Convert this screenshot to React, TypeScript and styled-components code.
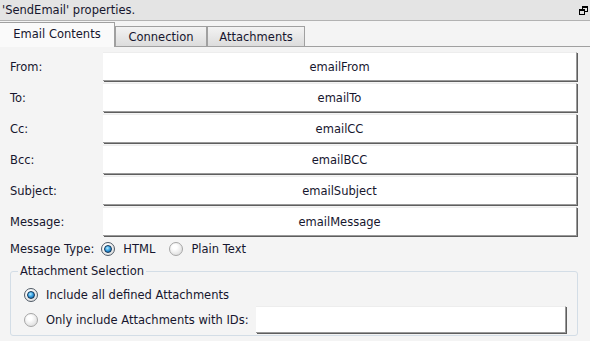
import React from "react";
import styled, { createGlobalStyle } from "styled-components";

const GlobalStyle = createGlobalStyle`
  body {
    margin: 0;
    font-family: "DejaVu Sans", Verdana, sans-serif;
    font-size: 11.5px;
    color: #16162e;
  }
`;

const Window = styled.div`
  width: 590px;
  height: 341px;
  background: #f4f4f4;
  display: flex;
  flex-direction: column;
  overflow: hidden;
`;

const TitleBar = styled.div`
  height: 20px;
  padding: 0 2px 0 2px;
  background: #e4e4e4;
  border-bottom: 1px solid #b2b2b2;
  display: flex;
  align-items: center;
  justify-content: space-between;
`;

const TabStrip = styled.div`
  height: 25px;
  display: flex;
  align-items: flex-end;
  border-bottom: 1px solid #a0a0a0;
`;

const Tab = styled.div<{ $active?: boolean; $width: number }>`
  box-sizing: border-box;
  width: ${(p) => p.$width}px;
  display: flex;
  align-items: center;
  justify-content: center;
  white-space: nowrap;
  border: 1px solid #a0a0a0;
  border-bottom: none;
  height: ${(p) => (p.$active ? "25px" : "20px")};
  margin-bottom: ${(p) => (p.$active ? "-1px" : "0")};
  padding-bottom: ${(p) => (p.$active ? "2px" : "0")};
  border-left: ${(p) => (p.$active ? "none" : "1px solid #a0a0a0")};
  background: ${(p) =>
    p.$active ? "#fafafa" : "linear-gradient(#f3f3f3, #dcdcdc)"};
  position: relative;
  z-index: ${(p) => (p.$active ? 1 : 0)};
`;

const Body = styled.div`
  padding: 5px 12px 0 10px;
  display: flex;
  flex-direction: column;
  gap: 2px;
`;

const Row = styled.div`
  display: grid;
  grid-template-columns: 93px 1fr;
  align-items: center;
  height: 29px;
`;

const Field = styled.div<{ $width?: number }>`
  box-sizing: border-box;
  height: ${(p) => (p.$width ? "27px" : "29px")};
  width: ${(p) => (p.$width ? `${p.$width}px` : "auto")};
  min-width: 0;
  flex-shrink: 1;
  background: #fff;
  border-top: 1px solid #ededed;
  border-right: 1px solid #9a9a9a;
  border-bottom: 1px solid #9a9a9a;
  box-shadow: 1px 1px 0 #5e5e5e;
  display: flex;
  align-items: center;
  justify-content: center;
  margin-left: ${(p) => (p.$width ? "auto" : "0")};
  margin-right: 1px;
`;

const TypeRow = styled.div`
  height: 22px;
  display: flex;
  align-items: center;
  gap: 7px;
`;

const Option = styled.label`
  display: inline-flex;
  align-items: center;
  gap: 8px;
  margin-right: 7px;
  white-space: nowrap;
  flex-shrink: 0;
`;

const Radio = styled.span<{ $checked?: boolean }>`
  box-sizing: border-box;
  width: 14px;
  height: 14px;
  border-radius: 50%;
  border: 1px solid ${(p) => (p.$checked ? "#4f5a66" : "#a6a6a6")};
  background: radial-gradient(circle at 40% 35%, #ffffff 20%, #d3d3d3 100%);
  display: inline-flex;
  align-items: center;
  justify-content: center;
  flex-shrink: 0;

  &::after {
    content: "";
    display: ${(p) => (p.$checked ? "block" : "none")};
    width: 8px;
    height: 8px;
    box-sizing: border-box;
    border-radius: 50%;
    border: 1px solid #0f3558;
    background: radial-gradient(
      circle at 40% 35%,
      #b4ecff 0%,
      #3aa4e6 45%,
      #0b4a86 100%
    );
  }
`;

const Group = styled.fieldset`
  min-width: 0;
  margin: 2px 0 0 0;
  padding: 5px 10px 2px 13px;
  border: 1px solid #d3dde6;
  border-radius: 3px;
  display: flex;
  flex-direction: column;
`;

const Legend = styled.legend`
  padding: 0 2px;
  margin-left: -6px;
  line-height: 14px;
`;

const GroupRow = styled.div<{ $tall?: boolean }>`
  height: ${(p) => (p.$tall ? "27px" : "23px")};
  display: flex;
  align-items: center;
`;

const RestoreIcon = () => (
  <svg width="9" height="9" viewBox="0 0 9 9" shapeRendering="crispEdges">
    <g fill="#000">
      <rect x="3" y="0" width="6" height="2" />
      <rect x="8" y="2" width="1" height="4" />
      <rect x="6" y="5" width="2" height="1" />
      <rect x="3" y="2" width="1" height="1" />
      <rect x="0" y="3" width="6" height="2" />
      <rect x="0" y="5" width="1" height="4" />
      <rect x="5" y="5" width="1" height="4" />
      <rect x="0" y="8" width="6" height="1" />
    </g>
  </svg>
);

const fields = [
  ["From:", "emailFrom"],
  ["To:", "emailTo"],
  ["Cc:", "emailCC"],
  ["Bcc:", "emailBCC"],
  ["Subject:", "emailSubject"],
  ["Message:", "emailMessage"],
];

export default function App() {
  return (
    <>
      <GlobalStyle />
      <Window>
        <TitleBar>
          <span>'SendEmail' properties.</span>
          <RestoreIcon />
        </TitleBar>
        <TabStrip>
          <Tab $active $width={115}>
            Email Contents
          </Tab>
          <Tab $width={92}>Connection</Tab>
          <Tab $width={98}>Attachments</Tab>
        </TabStrip>
        <Body>
          {fields.map(([label, value]) => (
            <Row key={label}>
              <span>{label}</span>
              <Field>{value}</Field>
            </Row>
          ))}
          <TypeRow>
            <span>Message Type:</span>
            <Option>
              <Radio $checked />
              HTML
            </Option>
            <Option>
              <Radio />
              Plain Text
            </Option>
          </TypeRow>
          <Group>
            <Legend>Attachment Selection</Legend>
            <GroupRow>
              <Option>
                <Radio $checked />
                Include all defined Attachments
              </Option>
            </GroupRow>
            <GroupRow $tall>
              <Option>
                <Radio />
                Only include Attachments with IDs:
              </Option>
              <Field $width={311} />
            </GroupRow>
          </Group>
        </Body>
      </Window>
    </>
  );
}
